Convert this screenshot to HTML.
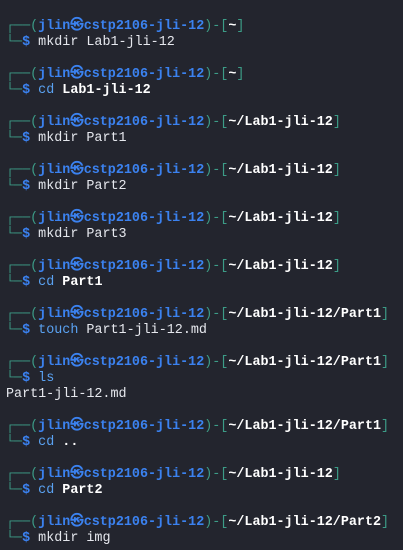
<!DOCTYPE html>
<html><head><meta charset="utf-8"><style>
html,body{margin:0;padding:0;background:#23252e;width:403px;height:550px;overflow:hidden}
pre{margin:0;padding:19px 0 0 6px;font-family:"Liberation Mono","DejaVu Sans Mono",monospace;font-size:13.4px;line-height:16px;color:#e6e8ee}
.g{color:#3c9c87}.b{color:#3b82f0;font-weight:bold}.w{color:#ffffff;font-weight:bold}.c{color:#5aa2f2}.m{color:#e3e6ec}
</style></head><body><pre><span class="g">┌──(</span><span class="b">jlin㉿cstp2106-jli-12</span><span class="g">)-[</span><span class="w">~</span><span class="g">]</span>
<span class="g">└─</span><span class="b">$</span> <span class="m">mkdir</span> Lab1-jli-12

<span class="g">┌──(</span><span class="b">jlin㉿cstp2106-jli-12</span><span class="g">)-[</span><span class="w">~</span><span class="g">]</span>
<span class="g">└─</span><span class="b">$</span> <span class="c">cd</span> <span class="w">Lab1-jli-12</span>

<span class="g">┌──(</span><span class="b">jlin㉿cstp2106-jli-12</span><span class="g">)-[</span><span class="w">~/Lab1-jli-12</span><span class="g">]</span>
<span class="g">└─</span><span class="b">$</span> <span class="m">mkdir</span> Part1

<span class="g">┌──(</span><span class="b">jlin㉿cstp2106-jli-12</span><span class="g">)-[</span><span class="w">~/Lab1-jli-12</span><span class="g">]</span>
<span class="g">└─</span><span class="b">$</span> <span class="m">mkdir</span> Part2

<span class="g">┌──(</span><span class="b">jlin㉿cstp2106-jli-12</span><span class="g">)-[</span><span class="w">~/Lab1-jli-12</span><span class="g">]</span>
<span class="g">└─</span><span class="b">$</span> <span class="m">mkdir</span> Part3

<span class="g">┌──(</span><span class="b">jlin㉿cstp2106-jli-12</span><span class="g">)-[</span><span class="w">~/Lab1-jli-12</span><span class="g">]</span>
<span class="g">└─</span><span class="b">$</span> <span class="c">cd</span> <span class="w">Part1</span>

<span class="g">┌──(</span><span class="b">jlin㉿cstp2106-jli-12</span><span class="g">)-[</span><span class="w">~/Lab1-jli-12/Part1</span><span class="g">]</span>
<span class="g">└─</span><span class="b">$</span> <span class="c">touch</span> Part1-jli-12.md

<span class="g">┌──(</span><span class="b">jlin㉿cstp2106-jli-12</span><span class="g">)-[</span><span class="w">~/Lab1-jli-12/Part1</span><span class="g">]</span>
<span class="g">└─</span><span class="b">$</span> <span class="c">ls</span>
Part1-jli-12.md

<span class="g">┌──(</span><span class="b">jlin㉿cstp2106-jli-12</span><span class="g">)-[</span><span class="w">~/Lab1-jli-12/Part1</span><span class="g">]</span>
<span class="g">└─</span><span class="b">$</span> <span class="c">cd</span> <span class="w">..</span>

<span class="g">┌──(</span><span class="b">jlin㉿cstp2106-jli-12</span><span class="g">)-[</span><span class="w">~/Lab1-jli-12</span><span class="g">]</span>
<span class="g">└─</span><span class="b">$</span> <span class="c">cd</span> <span class="w">Part2</span>

<span class="g">┌──(</span><span class="b">jlin㉿cstp2106-jli-12</span><span class="g">)-[</span><span class="w">~/Lab1-jli-12/Part2</span><span class="g">]</span>
<span class="g">└─</span><span class="b">$</span> <span class="m">mkdir</span> img</pre></body></html>
